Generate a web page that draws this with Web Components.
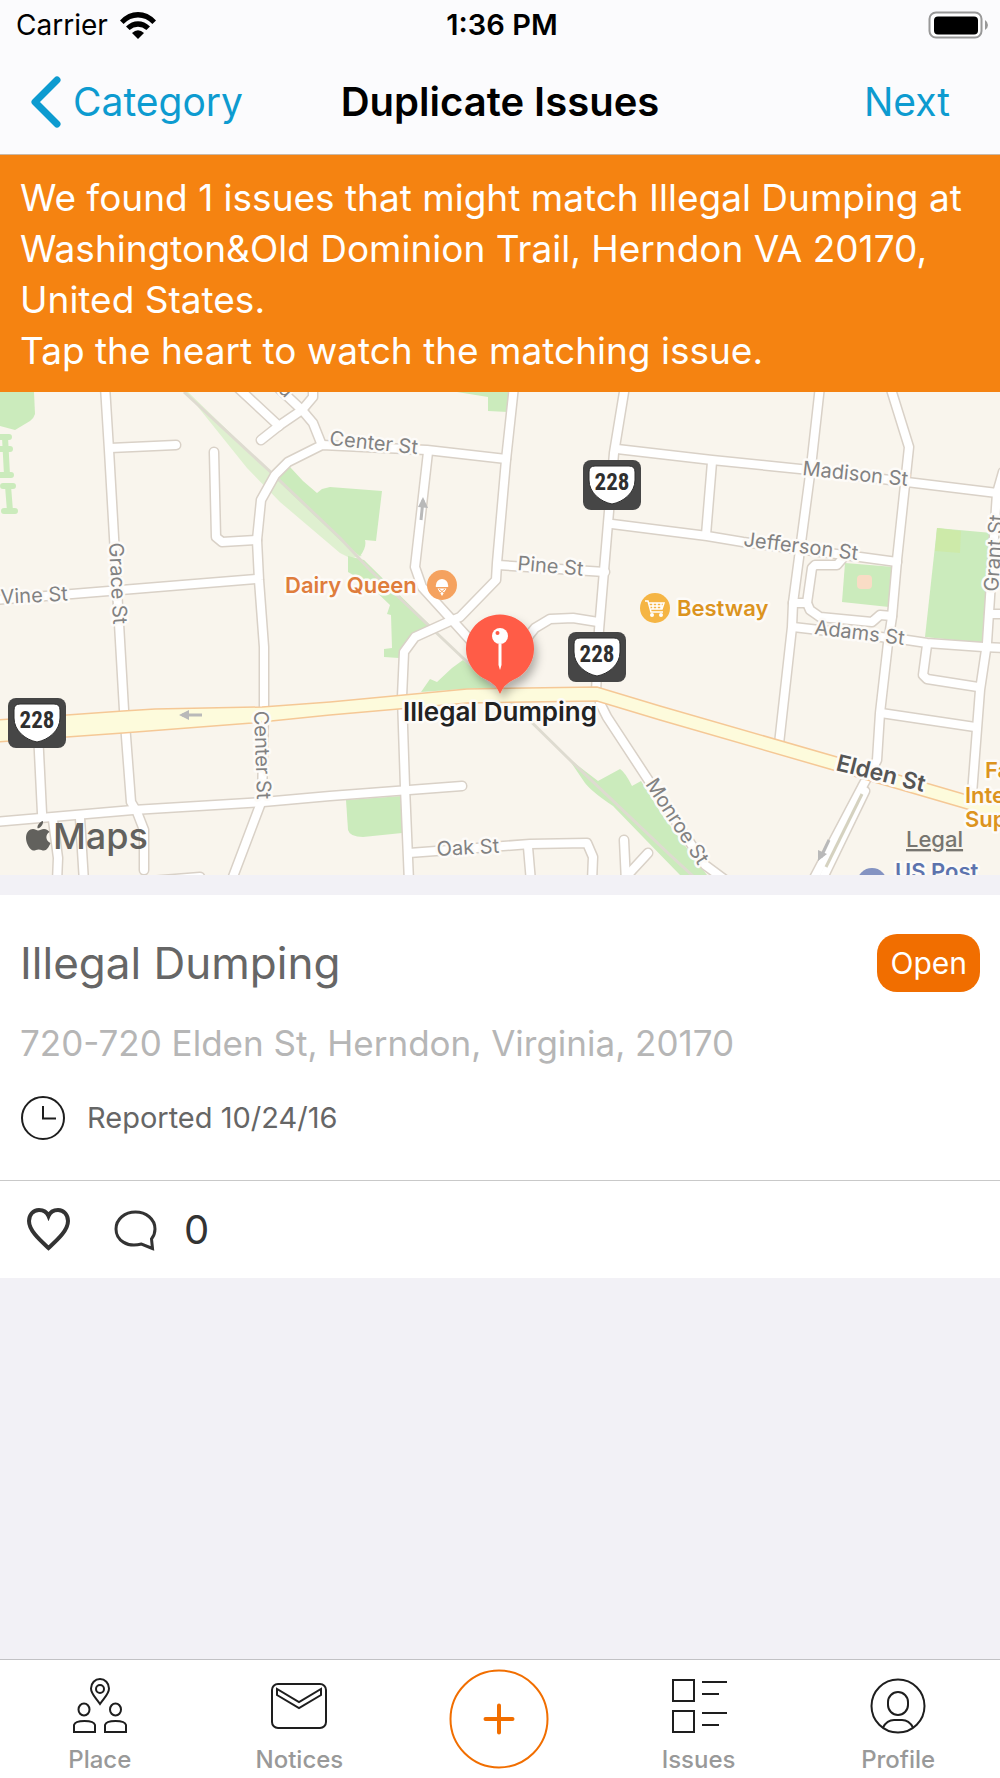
<!DOCTYPE html>
<html lang="en">
<head>
<meta charset="utf-8">
<meta name="viewport" content="width=device-width, initial-scale=1">
<title>Duplicate Issues</title>
<style>
  body { margin: 0; background: #f2f1f6; font-family: Inter, "Liberation Sans", sans-serif; color: #000; }
</style>
</head>
<body>
<issue-screen></issue-screen>

<script>
const define = (name, html, setup) => {
  const template = document.createElement('template');
  template.innerHTML = html;
  customElements.define(name, class extends HTMLElement {
    connectedCallback() {
      if (this.shadowRoot) return;
      this.attachShadow({ mode: 'open' }).append(template.content.cloneNode(true));
      if (setup) setup(this, this.shadowRoot);
    }
  });
};

define('status-bar', `
<style>
  :host { display: grid; grid-template-columns: 1fr auto 1fr; align-items: center; height: 50px; padding: 0 12px 0 16px; font-size: 28px; line-height: 32px; }
  .carrier { display: flex; align-items: center; gap: 12px; }
  .time { font-weight: 600; font-size: 29px; }
  .battery { justify-self: end; }
  svg { display: block; }
</style>
<div class="carrier"><span>Carrier</span>
  <svg width="36" height="28" viewBox="0 0 36 28" aria-hidden="true">
    <path d="M0 9.4Q8 1 18 1T36 9.4L32.4 13Q26 6.600 18 6.600T3.600 13Z"/>
    <path d="M6 15.600Q11.500 10.200 18 10.200T30 15.600L26.400 19Q22.500 15.700 18 15.700T9.600 19Z"/>
    <path d="M12 22Q15 19.300 18 19.300T24 22L18 28Z"/>
  </svg>
</div>
<span class="time">1:36 PM</span>
<svg class="battery" width="60" height="28" viewBox="0 0 60 28" role="img" aria-label="Battery full">
  <rect x="1.500" y="1.500" width="52" height="25" rx="6.500" fill="#fff" stroke="#989898" stroke-width="2"/>
  <rect x="6" y="5.500" width="44" height="18" rx="4" fill="#000"/>
  <path d="M57 9Q60 11 60 14T57 19Z" fill="#989898"/>
</svg>`);

define('nav-bar', `
<style>
  :host { display: grid; grid-template-columns: 1fr auto 1fr; align-items: center; height: 104px; padding: 0 30px; border-bottom: 1px solid #c9b8a6; font-size: 39px; line-height: 48px; }
  a, button { display: flex; align-items: center; gap: 12px; color: #0d9bd0; font: inherit; text-decoration: none; border: 0; padding: 0; background: none; }
  button { justify-self: end; padding-right: 20px; }
  h1 { margin: 0; font-size: 40px; font-weight: 600; }
</style>
<a href="#category"><svg width="31" height="52" viewBox="0 0 31 52" fill="none" stroke="currentColor" stroke-width="7" stroke-linecap="round" stroke-linejoin="round" aria-hidden="true"><path d="M27 4L5 26L27 48"/></svg><span>Category</span></a>
<h1><slot></slot></h1>
<button type="button">Next</button>`);

define('info-banner', `
<style>
  :host { display: block; padding: 17px 20px 16px; background: #f58311; color: #fff; font-size: 37px; line-height: 51px; }
  ::slotted(p) { margin: 0; }
</style>
<slot></slot>`);

const greens = `
  <path d="M0 0H34L35 22Q34 26 30 29L15 38L0 34Z"/>
  <path d="M0 45H9M0 57H10M1 83H11M5 45L7 83M3 94H13M4 119H15M8 94L10 119" fill="none" stroke="#cbebbc" stroke-width="6" stroke-linecap="round"/>
  <path d="M290 75L303 89L317 101L322 97L330 95L382 99L376 149L365 148Q367 155 360 164L340 148L275 86Z"/>
  <path d="M348 164V180L367 191L390 213L387 222L391 223L392 256L384 257V265L399 266L405 251L415 244L432 235L364 168Z"/>
  <path d="M463 268L452 276L437 290L430 287L421 300L463 297L500 296L478 280Z"/>
  <path d="M457 0L488 5V19L508 20L510 0Z"/>
  <path d="M346 408L348 438Q350 445 363 445L402 441V404Z"/>
  <path d="M568 366L598 389L620 377Q625 380 632 394L641 389L662 423L707 483H680L643 445L613 414Q592 400 585 391Z"/>
  <path d="M845 171L894 175L889 215L842 210Z"/>
  <path d="M937 136L992 141L984 251L925 245Z"/>`;

const roads = `
  <path d="M105 -6L109 58L114 145L124 318L131 410L137 420L144 438V478"/>
  <path d="M110 56L176 53"/>
  <path d="M214 60L216 145L222 150L257 148"/>
  <path d="M506 67L427 58L322 53L288 70L275 83L261 108L257 148L259 188L264 255V318L262 408L231 490"/>
  <path d="M272 -10L302 18L313 31L321 51"/>
  <path d="M313 -6V5L302 18L280 33L261 48"/>
  <path d="M236 -6L279 34"/>
  <path d="M428 60L415 175L422 195L452 228L480 259"/>
  <path d="M514 -6L506 68L497 171L496 188L460 225L448 230L415 245L404 260L402 305L405 395L409 490"/>
  <path d="M625 -6L614 61L608 131L599 238L596 300"/>
  <path d="M617 57L712 68L800 77L997 101"/>
  <path d="M612 132L707 144L743 150L860 165L897 170"/>
  <path d="M712 70L706 143"/>
  <path d="M498 173L605 180"/>
  <path d="M523 251L535 236L550 227L573 226L598 230"/>
  <path d="M-6 208L72 202L257 187"/>
  <path d="M-6 430L133 418L263 410L330 404L462 394"/>
  <path d="M38 340L42 421"/>
  <path d="M53 428L58 466L57 490"/>
  <path d="M80 426L84 490"/>
  <path d="M150 489L200 485"/>
  <path d="M409 461L530 452L587 451L593 465L592 490"/>
  <path d="M528 455L531 490"/>
  <path d="M624 448L626 490"/>
  <path d="M648 461L624 487"/>
  <path d="M600 311L607 325L647 386L705 473L728 490"/>
  <path d="M820 -6L811 75L793 211L792 235L779 352"/>
  <path d="M890 -6L909 55L897 168L892 225L888 251L880 321L877 368L862 395L812 490"/>
  <path d="M865 399L821 490"/>
  <path d="M793 211H807L812 176L815 173H837L843 166"/>
  <path d="M807 211L810 218L820 225L872 230L880 223L892 224"/>
  <path d="M793 235L907 248L927 251L983 255L1006 256"/>
  <path d="M927 253L923 283L927 287L978 295"/>
  <path d="M881 321L975 335"/>
  <path d="M1003 80L997 101L990 205L987 251L980 298L972 402"/>
  <path d="M989 222H1006"/>`;

const shield = (x, y) => `
  <g transform="translate(${x} ${y})">
    <rect width="58" height="50" rx="8" fill="#464646"/>
    <path d="M12 6H46Q52 6 52 12V20C52 33 40 42 29 44C18 42 6 33 6 20V12Q6 6 12 6Z" fill="#fff" stroke="#2d2d2d" stroke-width="1"/>
    <text class="route" x="29" y="30" text-anchor="middle">228</text>
  </g>`;

const street = (x, y, angle, name, cls = '') =>
  `<text class="street ${cls}" transform="translate(${x} ${y}) rotate(${angle})">${name}</text>`;

define('issue-map', `
<style>
  :host { display: block; background: #f9f5ed; }
  svg { display: block; width: 100%; height: auto; }
  text { font-family: Inter, "Liberation Sans", sans-serif; font-size: 20px; paint-order: stroke; stroke: #fdfbf8; stroke-width: 5px; stroke-linejoin: round; }
  .street { fill: #828282; }
  .main { fill: #555; font-size: 23px; font-weight: 600; }
  .place { font-size: 22px; font-weight: 600; }
  .food { fill: #df7d3c; }
  .shop { fill: #dc941f; }
  .post { fill: #5c73ae; }
  .pin { fill: #222; font-size: 26px; font-weight: 600; text-anchor: middle; }
  .route { font-family: "Liberation Sans Narrow", "Roboto Condensed", Roboto, sans-serif; font-size: 23px; font-weight: 700; fill: #2f2f2f; stroke: none; }
  .brand { font-size: 36px; font-weight: 500; fill: #62615d; stroke: none; }
  a { text-decoration: underline; fill: #777570; color: #777570; }
  a text { font-size: 22px; font-weight: 500; stroke: none; }
  .roads { fill: none; stroke-linecap: round; stroke-linejoin: round; }
  .case { stroke: #d9d1c7; stroke-width: 11px; }
  .fill { stroke: #fff; stroke-width: 8px; }
</style>
<svg viewBox="0 0 1000 483" role="group" aria-label="Map of the reported issue">
  <defs>
    <g id="roads">${roads}</g>
    <filter id="shadow" x="-50%" y="-50%" width="200%" height="200%"><feDropShadow dx="3" dy="6" stdDeviation="5" flood-opacity=".3"/></filter>
  </defs>
  <path d="M184 0L190 5L247 76L280 110L340 161L350 166L362 164L340 144L275 84L188 0Z" fill="#dff0d0"/>
  <g fill="#cbebbc">${greens}</g>
  <path d="M937 136L961 139L960 161L935 159Z" fill="#cdeaa9"/>
  <rect x="857" y="183" width="15" height="14" rx="4" fill="#f9dcc5"/>
  <path d="M184 0L275 84L340 146L370 178L463 266L512 311L570 368L670 463L694 485" fill="none" stroke="#dedbd0" stroke-width="3"/>
  <use href="#roads" class="roads case"/>
  <use href="#roads" class="roads fill"/>
  <path d="M-4 328L123 319L155 317L262 315L330 310L467 297L597 295L660 314L837 365L967 403L1004 412V430L967 417L833 378L660 328L597 309L467 311L330 323L252 331L123 341L-4 350Z" fill="#fdfbdc" stroke="#f5c896" stroke-width="1.500"/>
  <path d="M862 402L826 475" stroke="#d5d2c0" stroke-width="3"/>
  <g fill="none" stroke="#b9b9b9" stroke-width="3">
    <path d="M202 323H182"/><path d="M421 128L423 108"/><path d="M829 448L821 465"/>
  </g>
  <g fill="#b9b9b9"><path d="M179 323L189 318V328Z"/><path d="M423 105L418 115L428 116Z"/><path d="M818 469V458L827 462Z"/></g>

  <text class="street" transform="translate(277 -2) rotate(45)">d</text>
  ${street(329, 53, 6, 'Center St')}
  ${street(109, 151, 87, 'Grace St')}
  ${street(254, 319, 88, 'Center St')}
  ${street(1, 212, -3, 'Vine St')}
  ${street(517, 178, 5, 'Pine St')}
  ${street(802, 83, 6, 'Madison St')}
  ${street(743, 154, 7, 'Jefferson St')}
  ${street(814, 242, 7, 'Adams St')}
  ${street(998, 200, -86, 'Grant St')}
  ${street(645, 392, 57, 'Monroe St')}
  ${street(437, 464, -3, 'Oak St')}
  ${street(835, 378, 14, 'Elden St', 'main')}
  <text class="place food" x="285" y="201">Dairy Queen</text>
  <text class="place shop" x="677" y="224">Bestway</text>
  <text class="place shop" x="985" y="386">Fa</text>
  <text class="place shop" x="965" y="411">Inte</text>
  <text class="place shop" x="965" y="435">Sup</text>
  <text class="place post" x="895" y="487">US Post</text>
  <circle cx="872" cy="491" r="15" fill="#8493c2"/>

  <circle cx="442" cy="193" r="15" fill="#f5a25f"/>
  <path d="M436 193A6 6 0 1 1 448 193Q449 195 447 195H437Q435 195 436 193Z" fill="#fff"/>
  <path d="M437.500 196.500H446.500L442 204Z" fill="#fff"/>
  <path d="M439 197L444 201M445 197L440 201" stroke="#f5a25f" stroke-width="1"/>
  <circle cx="655" cy="216" r="15" fill="#f5b544"/>
  <path d="M645 209H648L651 220H663M649 211H664L662 217H651M653 211V217M657 211V217M661 211V217M650 214H663" fill="none" stroke="#fff" stroke-width="1.500"/>
  <circle cx="652" cy="223" r="2" fill="#fff"/><circle cx="661" cy="223" r="2" fill="#fff"/>

  ${shield(8, 306)}${shield(583, 68)}${shield(568, 240)}

  <text class="pin" x="500" y="329">Illegal Dumping</text>
  <path filter="url(#shadow)" d="M500 302Q496 292 487 288A34 34 0 1 1 513 288Q504 292 500 302Z" fill="#ff5b47"/>
  <circle cx="500" cy="244" r="8" fill="#fff"/><circle cx="497.500" cy="241" r="2" fill="#ff5b47"/>
  <path d="M498.500 252H501.500V273L500 278L498.500 273Z" fill="#fff"/>

  <path transform="translate(26 429)" fill="#62615d" d="M17 0C17.500 4 14 7.500 11.500 7.300C11 4 14 .6 17 0ZM12 9.500C14 9.500 15.500 8 18 8C20.500 8 22.500 9.500 23.500 11C19 13.500 19.500 20 24.500 22C23 26 20.500 29.500 18 29.500C16 29.500 15 28.400 12.700 28.400C10.500 28.400 9.500 29.500 7.500 29.500C4 29.500 0 22.500 0 17C0 11 3.500 8 7 8C9 8 11 9.500 12 9.500Z"/>
  <text class="brand" x="53" y="457">Maps</text>
  <a href="#legal"><text x="906" y="455" text-decoration="underline">Legal</text></a>
</svg>`);

define('issue-card', `
<style>
  :host { display: block; margin-top: 20px; background: #fff; color: #666; }
  .body { display: flex; flex-direction: column; padding: 39px 20px 37px; }
  .head { display: flex; align-items: center; justify-content: space-between; }
  h2 { margin: 0; font-size: 44px; line-height: 58px; font-weight: 400; }
  .badge { padding: 0 13px; border-radius: 20px; background: #f16e00; color: #fff; font-size: 30px; line-height: 58px; }
  .address { margin: 29px 0 27px; color: #b6b6b6; font-size: 35px; line-height: 44px; }
  .when { display: flex; align-items: center; gap: 21px; font-size: 29px; line-height: 51px; }
  svg { display: block; fill: none; stroke: #1e1e1e; }
  .actions { display: flex; align-items: center; gap: 42px; height: 97px; padding: 0 26px; border-top: 1px solid #c9c9c9; color: #333; }
  .actions svg { stroke: #333; }
  button { display: flex; align-items: center; gap: 26px; padding: 0; border: 0; background: none; color: inherit; font: inherit; font-size: 40px; line-height: 48px; }
</style>
<div class="body">
  <div class="head"><h2><slot name="title"></slot></h2><span class="badge"><slot name="status"></slot></span></div>
  <div class="address"><slot name="address"></slot></div>
  <div class="when">
    <svg width="46" height="46" viewBox="0 0 46 46" stroke-width="2" aria-hidden="true"><circle cx="23" cy="23" r="21"/><path d="M23 11V23.500H36"/></svg>
    <slot name="date"></slot>
  </div>
</div>
<div class="actions">
  <button type="button" aria-label="Watch issue"><svg width="45" height="46" viewBox="0 0 45 46" stroke-width="4" aria-hidden="true"><path d="M22.500 41C15 34 3 24 3 14C3 8 7 3 13 3Q20 3 22.500 9Q25 3 32 3C38 3 42 8 42 14C42 24 30 34 22.500 41Z"/></svg></button>
  <button type="button" aria-label="Comments"><svg width="45" height="44" viewBox="0 0 45 44" stroke-width="3" aria-hidden="true"><path d="M39.500 40.500L28.500 36C14 40 3 32 3 21C3 11 12 4 22.500 4S42 11 42 21C42 25 40.500 28.500 38.500 31Z"/></svg><slot name="comments"></slot></button>
</div>`);

define('tab-item', `
<style>
  :host { flex: 1; display: flex; justify-content: center; }
  a { display: flex; flex-direction: column; align-items: center; gap: 12px; padding-top: 18px; color: #999; font-size: 24px; line-height: 28px; font-weight: 500; text-decoration: none; }
  ::slotted(svg) { display: block; fill: none; stroke: #1e1e1e; stroke-width: 2px; }
</style>
<a><slot name="icon"></slot><span><slot></slot></span></a>`,
(host, root) => root.querySelector('a').setAttribute('href', host.getAttribute('to')));

define('tab-bar', `
<style>
  :host { display: flex; align-items: stretch; height: 118px; padding-right: 2px; border-top: 1px solid #c2c2c5; background: #fff; }
  .add { flex: 1; display: flex; justify-content: center; align-items: center; }
  button { padding: 0; border: 0; background: none; color: #f16e00; }
  svg { display: block; }
</style>
<tab-item to="#place">
  <svg slot="icon" width="56" height="56" viewBox="0 0 56 56" aria-hidden="true"><path d="M28 26C24 20 19 16 19 10.500A9 9.500 0 0 1 37 10.500C37 16 32 20 28 26Z"/><circle cx="28" cy="11" r="4"/><ellipse cx="12" cy="31.500" rx="5.500" ry="6"/><ellipse cx="43.500" cy="31.500" rx="5.500" ry="6"/><path d="M2 54V47Q3 43 12.500 43T23 47V54ZM33 54V47Q34 43 43.500 43T54 47V54Z"/></svg>Place</tab-item>
<tab-item to="#notices">
  <svg slot="icon" width="56" height="56" viewBox="0 0 56 56" aria-hidden="true"><rect x="1" y="6" width="54" height="44" rx="6"/><path d="M6 11V17L28 30L50 17V11L28 24Z"/></svg>Notices</tab-item>
<div class="add"><button type="button" aria-label="Add issue"><svg width="100" height="100" viewBox="0 0 100 100" fill="none" stroke="currentColor" aria-hidden="true"><circle cx="50" cy="50" r="48.500" stroke-width="2"/><path d="M36.500 50H63.500M50 36.500V63.500" stroke-width="4" stroke-linecap="round"/></svg></button></div>
<tab-item to="#issues">
  <svg slot="icon" width="56" height="56" viewBox="0 0 56 56" aria-hidden="true"><path d="M2 2H23V23H2ZM2 33H23V54H2ZM31 4H56M31 16H48M31 35H56M31 47H48"/></svg>Issues</tab-item>
<tab-item to="#profile">
  <svg slot="icon" width="56" height="56" viewBox="0 0 56 56" aria-hidden="true"><circle cx="28" cy="28" r="26.500"/><rect x="18" y="14" width="20" height="23" rx="10"/><path d="M13 49.500Q17 42 24 42H32Q39 42 43 49.500"/></svg>Profile</tab-item>`);

define('issue-screen', `
<style>
  :host { display: flex; flex-direction: column; min-height: 100vh; }
  header { background: #fbfbfd; }
  main { flex: 1; }
</style>
<header><status-bar></status-bar><nav-bar>Duplicate Issues</nav-bar></header>
<main>
  <info-banner><p>We found 1 issues that might match Illegal Dumping at Washington&amp;Old Dominion Trail, Herndon VA 20170, United States.</p><p>Tap the heart to watch the matching issue.</p></info-banner>
  <issue-map></issue-map>
  <issue-card>
    <span slot="title">Illegal Dumping</span>
    <span slot="status">Open</span>
    <span slot="address">720-720 Elden St, Herndon, Virginia, 20170</span>
    <span slot="date">Reported 10/24/16</span>
    <span slot="comments">0</span>
  </issue-card>
</main>
<tab-bar></tab-bar>`);
</script>
</body>
</html>
